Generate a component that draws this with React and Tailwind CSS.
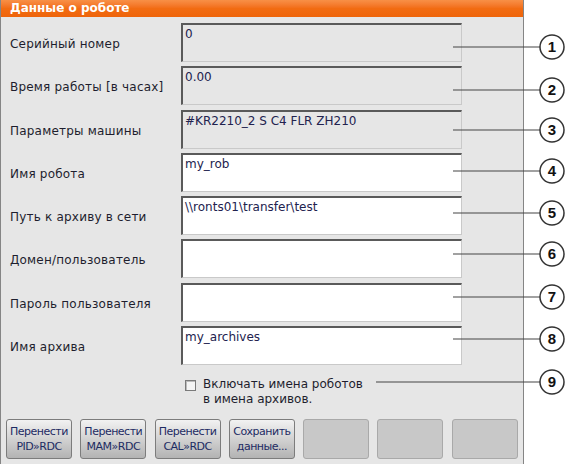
import React from "react";

const rows = [
  { label: "Серийный номер", value: "0", ro: true },
  { label: "Время работы [в часах]", value: "0.00", ro: true },
  { label: "Параметры машины", value: "#KR2210_2 S C4 FLR ZH210", ro: true },
  { label: "Имя робота", value: "my_rob" },
  { label: "Путь к архиву в сети", value: "\\\\ronts01\\transfer\\test" },
  { label: "Домен/пользователь", value: "" },
  { label: "Пароль пользователя", value: "" },
  { label: "Имя архива", value: "my_archives" },
];

const callouts = [
  { n: 1, y: 47, x1: 453 },
  { n: 2, y: 90, x1: 453 },
  { n: 3, y: 130, x1: 453 },
  { n: 4, y: 171, x1: 453 },
  { n: 5, y: 213, x1: 453 },
  { n: 6, y: 254, x1: 453 },
  { n: 7, y: 297, x1: 453 },
  { n: 8, y: 339, x1: 453 },
  { n: 9, y: 382, x1: 376 },
];

function Btn({ a, b }) {
  return (
    <div className="w-[66px] h-[40px] rounded-[3px] border border-[#7c7c7c] bg-gradient-to-b from-[#f2f2f2] to-[#b3b3b3] flex flex-col items-center justify-center text-[11px] leading-[15px] text-[#1d2b63] tracking-[-0.5px]">
      <span>{a}</span>
      <span>{b}</span>
    </div>
  );
}

function Empty() {
  return <div className="w-[66px] h-[40px] rounded-[3px] border border-[#a9a9a9] bg-[#c8c8c8]" />;
}

export default function App() {
  return (
    <div className="relative w-[572px] h-[464px] bg-white overflow-hidden" style={{ fontFamily: '"DejaVu Sans", sans-serif' }}>
      <div className="w-[524px] h-full bg-[#e6e6e6] border-l border-r border-[#858585] flex flex-col">
        <div className="h-[17px] bg-gradient-to-b from-[#f89046] via-[#f26c12] to-[#ee640a] text-white font-bold text-[12px] leading-[17px] pl-[9px]">
          Данные о роботе
        </div>
        <div className="flex flex-col gap-[4.3px] pt-[6px]">
          {rows.map((r, i) => (
            <div key={i} className="flex h-[39px]">
              <div className="w-[180px] pl-[9px] pt-[3px] flex items-center text-[12px] text-[#1e1e2e] tracking-[0.2px]">{r.label}</div>
              <div
                className={`w-[281px] h-[39px] border-t-2 border-l-2 border-t-[#5a5a5a] border-l-[#5a5a5a] border-b border-r border-b-[#c9c9c9] border-r-[#c9c9c9] pl-[2px] pt-[1px] text-[12px] leading-[16px] text-[#22224e] ${r.ro ? "bg-[#e6e6e6]" : "bg-white"}`}
              >
                {r.value}
              </div>
            </div>
          ))}
        </div>
        <div className="flex pl-[184px] pt-[12px] gap-[7px]">
          <div className="w-[11px] h-[11px] mt-[3px] border border-[#7a7a7a] bg-[#f4f4f4] shadow-[inset_1px_1px_0_#bbb]" />
          <div className="text-[12px] leading-[15px] text-[#1e1e2e]">
            <div>Включать имена роботов</div>
            <div>в имена архивов.</div>
          </div>
        </div>
        <div className="flex pl-[5px] pt-[12px] gap-[8.3px]">
          <Btn a="Перенести" b="PID»RDC" />
          <Btn a="Перенести" b="MAM»RDC" />
          <Btn a="Перенести" b="CAL»RDC" />
          <Btn a="Сохранить" b="данные..." />
          <Empty />
          <Empty />
          <Empty />
        </div>
      </div>
      <svg className="absolute inset-0 pointer-events-none" width="572" height="464">
        {callouts.map((c) => (
          <g key={c.n}>
            <line x1={c.x1} y1={c.y} x2={540} y2={c.y} stroke="#444" strokeWidth="1.2" />
            <circle cx={552} cy={c.y} r={12} fill="white" stroke="#333" strokeWidth="1.5" />
            <text x={552} y={c.y + 5} textAnchor="middle" fontFamily="Liberation Sans, Arial, sans-serif" fontWeight="bold" fontSize="15" fill="#111">
              {c.n}
            </text>
          </g>
        ))}
      </svg>
    </div>
  );
}
